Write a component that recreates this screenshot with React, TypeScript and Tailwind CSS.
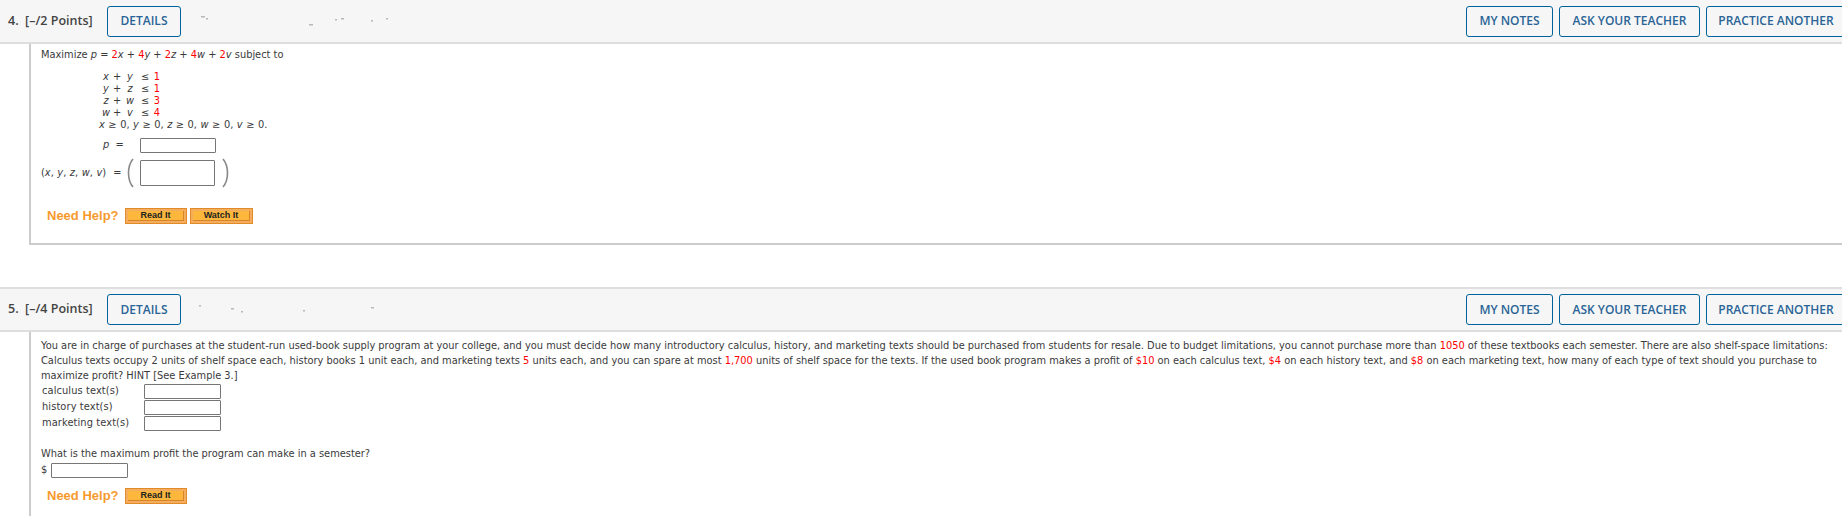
import React from 'react';

const body = "font-['DejaVu_Sans',sans-serif] text-[9.85px] text-[#3a3a3a]";

const Red = ({ children }: { children: React.ReactNode }) => <span className="text-[#f00]">{children}</span>;
const V = ({ children }: { children: React.ReactNode }) => <i>{children}</i>;

const HeaderButton = ({ label, className }: { label: string; className: string }) => (
  <button className={`h-[31px] shrink-0 rounded-[3px] border border-[#00629b] bg-transparent text-center font-['Open_Sans',sans-serif] text-[12px] font-semibold text-[#2a6496] ${className}`}>
    {label}
  </button>
);

const Specks = ({ points }: { points: number[][] }) => (
  <svg width="300" height="30" className="shrink-0">
    {points.map((p, i) => (
      <rect key={i} x={p[0]} y={p[1]} width={p[2]} height="1.5" fill="#b8b8b8" />
    ))}
  </svg>
);

const Header = ({ num, points, specks, border }: { num: string; points: string; specks: number[][]; border: string }) => (
  <div className={`flex items-center bg-[#f6f6f6] pl-2 ${border}`}>
    <span className="w-[99px] shrink-0 whitespace-nowrap font-['Open_Sans',sans-serif] text-[12.5px] font-semibold text-[#444]">
      {num}&nbsp; [–/{points} Points]
    </span>
    <HeaderButton label="DETAILS" className="w-[74px]" />
    <Specks points={specks} />
    <div className="ml-auto flex gap-[6px]">
      <HeaderButton label="MY NOTES" className="w-[87px]" />
      <HeaderButton label="ASK YOUR TEACHER" className="w-[141px]" />
      <HeaderButton label="PRACTICE ANOTHER" className="-mr-[12px] w-[148px] pr-[8px]" />
    </div>
  </div>
);

const HelpButton = ({ label, className }: { label: string; className: string }) => (
  <div className={`h-[16px] border border-[#e08a2a] bg-[#f3ad5c] p-[2px] ${className}`}>
    <div className="flex h-full items-center justify-center border-b border-r border-[#d9832a] bg-[#fdb73d] font-['Liberation_Sans',sans-serif] text-[9px] font-bold text-[#222]">
      {label}
    </div>
  </div>
);

const NeedHelp = ({ watch }: { watch?: boolean }) => (
  <div className="flex items-center">
    <span className="w-[78px] font-['Liberation_Sans',sans-serif] text-[13px] font-bold text-[#f79a2e]">Need Help?</span>
    <HelpButton label="Read It" className="w-[62px]" />
    {watch && <HelpButton label="Watch It" className="ml-[3px] w-[63px]" />}
  </div>
);

const Box = ({ className }: { className: string }) => (
  <div className={`rounded-[1px] border border-[#767676] bg-white ${className}`} />
);

const Ineq = ({ a, b, n }: { a: string; b: string; n: string }) => (
  <div className="grid h-[12px] grid-cols-[12px_10px_16px_14px_10px] items-center justify-items-center leading-[12px]">
    <V>{a}</V>
    <span>+</span>
    <V>{b}</V>
    <span>≤</span>
    <Red>{n}</Red>
  </div>
);

const Paren = ({ flip }: { flip?: boolean }) => (
  <svg width="8" height="30" viewBox="0 0 8 30" className={flip ? 'shrink-0 -scale-x-100' : 'shrink-0'}>
    <path d="M7 1 C1 8 1 22 7 29" fill="none" stroke="#888" strokeWidth="1.6" />
  </svg>
);

const TextRow = ({ label }: { label: string }) => (
  <div className="flex h-[16px] items-center">
    <span className="w-[103px] pl-[1px] tracking-[0.1px]">{label}</span>
    <Box className="h-[15px] w-[77px]" />
  </div>
);

export default function App() {
  return (
    <div className="h-[516px] w-[1842px] overflow-hidden bg-white">
      <Header
        num="4."
        points="2"
        border="h-[44px] border-b-2 border-[#dedede]"
        specks={[[20, 10, 4], [25, 12, 2], [128, 18, 4], [154, 13, 2], [160, 12, 3], [190, 14, 2], [205, 12, 2]]}
      />
      <div className={`ml-[29px] h-[201px] border-b-2 border-l-2 border-[#ccc] pl-[10px] pt-[4px] ${body}`}>
        <div className="h-[14px] leading-[14px]">
          Maximize <V>p</V> = <Red>2</Red><V>x</V> + <Red>4</Red><V>y</V> + <Red>2</Red><V>z</V> + <Red>4</Red><V>w</V> + <Red>2</Red><V>v</V> subject to
        </div>
        <div className="ml-[59px] mt-[9px] w-fit">
          <Ineq a="x" b="y" n="1" />
          <Ineq a="y" b="z" n="1" />
          <Ineq a="z" b="w" n="3" />
          <Ineq a="w" b="v" n="4" />
        </div>
        <div className="ml-[58px] h-[12px] leading-[12px] [word-spacing:0.4px]">
          <V>x</V> ≥ 0, <V>y</V> ≥ 0, <V>z</V> ≥ 0, <V>w</V> ≥ 0, <V>v</V> ≥ 0.
        </div>
        <div className="mt-[6px] flex h-[16px] items-center">
          <span className="ml-[62px] w-[37px]"><V>p</V> &nbsp;=</span>
          <Box className="h-[15px] w-[76px]" />
        </div>
        <div className="mt-[5px] flex h-[30px] items-center">
          <span className="w-[85px] whitespace-nowrap [word-spacing:0.4px]">(<V>x</V>, <V>y</V>, <V>z</V>, <V>w</V>, <V>v</V>) &nbsp;=</span>
          <Paren />
          <Box className="ml-[6px] h-[26px] w-[75px]" />
          <div className="ml-[7px]"><Paren flip /></div>
        </div>
        <div className="ml-[6px] mt-[18px]">
          <NeedHelp watch />
        </div>
      </div>
      <div className="h-[42px]" />
      <Header
        num="5."
        points="4"
        border="h-[45px] border-y-2 border-[#dedede]"
        specks={[[18, 10, 2], [50, 13, 3], [60, 16, 2], [122, 15, 2], [190, 12, 3]]}
      />
      <div className={`ml-[29px] h-[185px] border-l-2 border-[#ccc] pl-[10px] pt-[6px] ${body}`}>
        <div className="whitespace-nowrap leading-[15px]">
          <div>You are in charge of purchases at the student-run used-book supply program at your college, and you must decide how many introductory calculus, history, and marketing texts should be purchased from students for resale. Due to budget limitations, you cannot purchase more than <Red>1050</Red> of these textbooks each semester. There are also shelf-space limitations:</div>
          <div>Calculus texts occupy 2 units of shelf space each, history books 1 unit each, and marketing texts <Red>5</Red> units each, and you can spare at most <Red>1,700</Red> units of shelf space for the texts. If the used book program makes a profit of <Red>$10</Red> on each calculus text, <Red>$4</Red> on each history text, and <Red>$8</Red> on each marketing text, how many of each type of text should you purchase to</div>
          <div>maximize profit? HINT [See Example 3.]</div>
        </div>
        <TextRow label="calculus text(s)" />
        <TextRow label="history text(s)" />
        <TextRow label="marketing text(s)" />
        <div className="mt-[15px] leading-[15px]">What is the maximum profit the program can make in a semester?</div>
        <div className="mt-[1px] flex h-[16px] items-center">
          <span className="w-[10px]">$</span>
          <Box className="h-[15px] w-[77px]" />
        </div>
        <div className="ml-[6px] mt-[8px]">
          <NeedHelp />
        </div>
      </div>
    </div>
  );
}
